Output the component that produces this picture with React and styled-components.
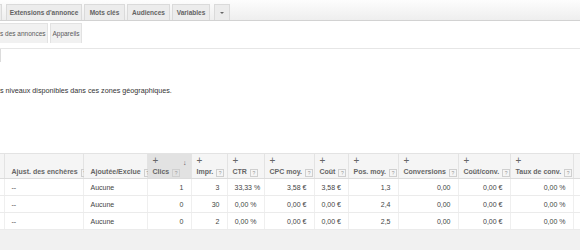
import React from 'react'
import styled, { createGlobalStyle } from 'styled-components'

const GlobalStyle = createGlobalStyle`
  html, body {
    margin: 0;
    padding: 0;
    background: #fff;
    width: 580px;
    height: 250px;
    overflow: hidden;
    font-family: Arial, "Liberation Sans", sans-serif;
    color: #333;
  }
`

const columns = [
  { key: 'stub', width: 4, stub: true },
  { key: 'ajust', width: 79, label: 'Ajust. des enchères', text: true },
  { key: 'ajout', width: 64, label: 'Ajoutée/Exclue', text: true },
  { key: 'clics', width: 44, label: 'Clics', sorted: true, extra: 6 },
  { key: 'impr', width: 36, label: 'Impr.' },
  { key: 'ctr', width: 37, label: 'CTR', extra: 3 },
  { key: 'cpc', width: 50, label: 'CPC moy.' },
  { key: 'cout', width: 34, label: 'Coût' },
  { key: 'pos', width: 50, label: 'Pos. moy.' },
  { key: 'conv', width: 60, label: 'Conversions' },
  { key: 'cconv', width: 52, label: 'Coût/conv.' },
  { key: 'taux', width: 63, label: 'Taux de conv.' },
  { key: 'more', width: 30, plusOnly: true },
]

const rows = [
  ['', '--', 'Aucune', '1', '3', '33,33 %', '3,58 €', '3,58 €', '1,3', '0,00', '0,00 €', '0,00 %', ''],
  ['', '--', 'Aucune', '0', '30', '0,00 %', '0,00 €', '0,00 €', '2,4', '0,00', '0,00 €', '0,00 %', ''],
  ['', '--', 'Aucune', '0', '2', '0,00 %', '0,00 €', '0,00 €', '2,5', '0,00', '0,00 €', '0,00 %', ''],
]

const Page = styled.div`
  width: 580px;
  height: 250px;
  display: flex;
  flex-direction: column;
  background: #f1f1f1;
`

const Top = styled.div`
  background: #fff;
  display: flex;
  flex-direction: column;
`

const TabBar = styled.div`
  display: flex;
  align-items: flex-end;
  gap: 2px;
  height: 21px;
  padding-top: 4px;
  box-sizing: border-box;
  background: linear-gradient(#fdfdfd, #eeeeee);
  border-bottom: 1px solid #d2d2d2;
  margin-left: -16px;
`

const Tab = styled.div`
  width: ${p => p.$w}px;
  height: 16px;
  box-sizing: border-box;
  display: flex;
  align-items: center;
  justify-content: center;
  margin-left: ${p => p.$gapBefore || 0}px;
  background: #ececec;
  border: 1px solid #dadada;
  border-bottom: none;
  font-size: 6.5px;
  font-weight: bold;
  color: #636363;
  white-space: nowrap;
`

const Caret = styled.span`
  width: 0;
  height: 0;
  border-left: 2px solid transparent;
  border-right: 2px solid transparent;
  border-top: 2px solid #666;
`

const SubBar = styled.div`
  display: flex;
  gap: 2px;
  padding: 2px 0 5px;
  margin-left: -1px;
  border-bottom: 1px solid #e6e6e6;
`

const SubTab = styled.div`
  width: ${p => p.$w}px;
  height: 20px;
  box-sizing: border-box;
  display: flex;
  align-items: center;
  justify-content: ${p => (p.$flush ? 'flex-start' : 'center')};
  background: #f1f1f1;
  border: 1px solid #e2e2e2;
  border-bottom: none;
  font-size: 6.5px;
  color: #5a5a5a;
  white-space: nowrap;
`

const StubBox = styled.div`
  width: 10px;
  height: 13px;
  margin-left: -9px;
  border: 1px solid #dcdcdc;
  border-top: none;
  box-sizing: border-box;
`

const Notice = styled.p`
  margin: 24px 0 0 0;
  font-size: 7.2px;
  line-height: 10px;
  color: #333;
  white-space: nowrap;
`

const Spacer = styled.div`
  height: 57px;
`

const Table = styled.table`
  border-collapse: collapse;
  table-layout: fixed;
  width: 603px;
  background: #fff;
  font-size: 7px;
  border-top: 1px solid #e3e3e3;
`

const Th = styled.th`
  height: 25px;
  box-sizing: border-box;
  padding: ${p => (p.$stub ? '0' : `3px 7px 0 ${p.$text ? 7 : p.$edge ? 1 : 5}px`)};
  background: ${p => (p.$sorted ? '#e2e2e2' : '#f5f5f5')};
  border-right: 1px solid #e3e3e3;
  border-bottom: 1px solid #dcdcdc;
  vertical-align: top;
  text-align: ${p => (p.$text ? 'left' : 'right')};
  font-weight: bold;
  color: #666;
  white-space: nowrap;
  position: relative;
`

const Plus = styled.div`
  text-align: left;
  font-size: 10px;
  font-weight: normal;
  line-height: 8px;
  color: #666;
  height: 9px;
`

const SortArrow = styled.span`
  position: absolute;
  top: 5px;
  right: 4px;
  font-size: 7px;
  line-height: 7px;
  color: #555;
`

const Label = styled.div`
  padding-top: ${p => (p.$text ? 11 : 2)}px;
  padding-right: ${p => p.$extra || 0}px;
`

const Help = styled.span`
  display: inline-block;
  width: 6px;
  height: 6px;
  margin-left: 3px;
  border: 1px solid #cfcfcf;
  font-size: 5px;
  line-height: 6px;
  text-align: center;
  color: #999;
  font-weight: normal;
  vertical-align: -1px;
`

const Td = styled.td`
  height: 17px;
  box-sizing: border-box;
  padding: ${p => (p.$stub ? '0' : '0 7px')};
  border-right: 1px solid #efefef;
  border-bottom: 1px solid #ebebeb;
  text-align: ${p => (p.$text ? 'left' : 'right')};
  color: #444;
  white-space: nowrap;
`

const TableWrap = styled.div`
  overflow: hidden;
`

const Bottom = styled.div`
  flex: 1;
  background: #f1f1f1;
`

export default function App() {
  return (
    <>
      <GlobalStyle />
      <Page>
        <Top>
          <TabBar>
            <Tab $w={18} />
            <Tab $w={76} $gapBefore={2}>Extensions d'annonce</Tab>
            <Tab $w={41}>Mots clés</Tab>
            <Tab $w={43}>Audiences</Tab>
            <Tab $w={38}>Variables</Tab>
            <Tab $w={16} $gapBefore={2}>
              <Caret />
            </Tab>
          </TabBar>
          <SubBar>
            <SubTab $w={49} $flush>s des annonces</SubTab>
            <SubTab $w={32}>Appareils</SubTab>
          </SubBar>
          <StubBox />
          <Notice>s niveaux disponibles dans ces zones géographiques.</Notice>
          <Spacer />
        </Top>
        <TableWrap>
          <Table>
            <colgroup>
              {columns.map(c => (
                <col key={c.key} style={{ width: c.width }} />
              ))}
            </colgroup>
            <thead>
              <tr>
                {columns.map(c => (
                  <Th
                    key={c.key}
                    $text={c.text || !c.label}
                    $sorted={c.sorted}
                    $stub={c.stub}
                    $edge={c.plusOnly}
                  >
                    {(c.plusOnly || (c.label && !c.text)) && <Plus>+</Plus>}
                    {c.sorted && <SortArrow>&#8595;</SortArrow>}
                    {c.label && (
                      <Label $text={c.text} $extra={c.extra}>
                        {c.label}
                        <Help>?</Help>
                      </Label>
                    )}
                  </Th>
                ))}
              </tr>
            </thead>
            <tbody>
              {rows.map((r, i) => (
                <tr key={i}>
                  {r.map((v, j) => (
                    <Td key={j} $text={columns[j].text} $stub={columns[j].stub}>
                      {v}
                    </Td>
                  ))}
                </tr>
              ))}
            </tbody>
          </Table>
        </TableWrap>
        <Bottom />
      </Page>
    </>
  )
}
